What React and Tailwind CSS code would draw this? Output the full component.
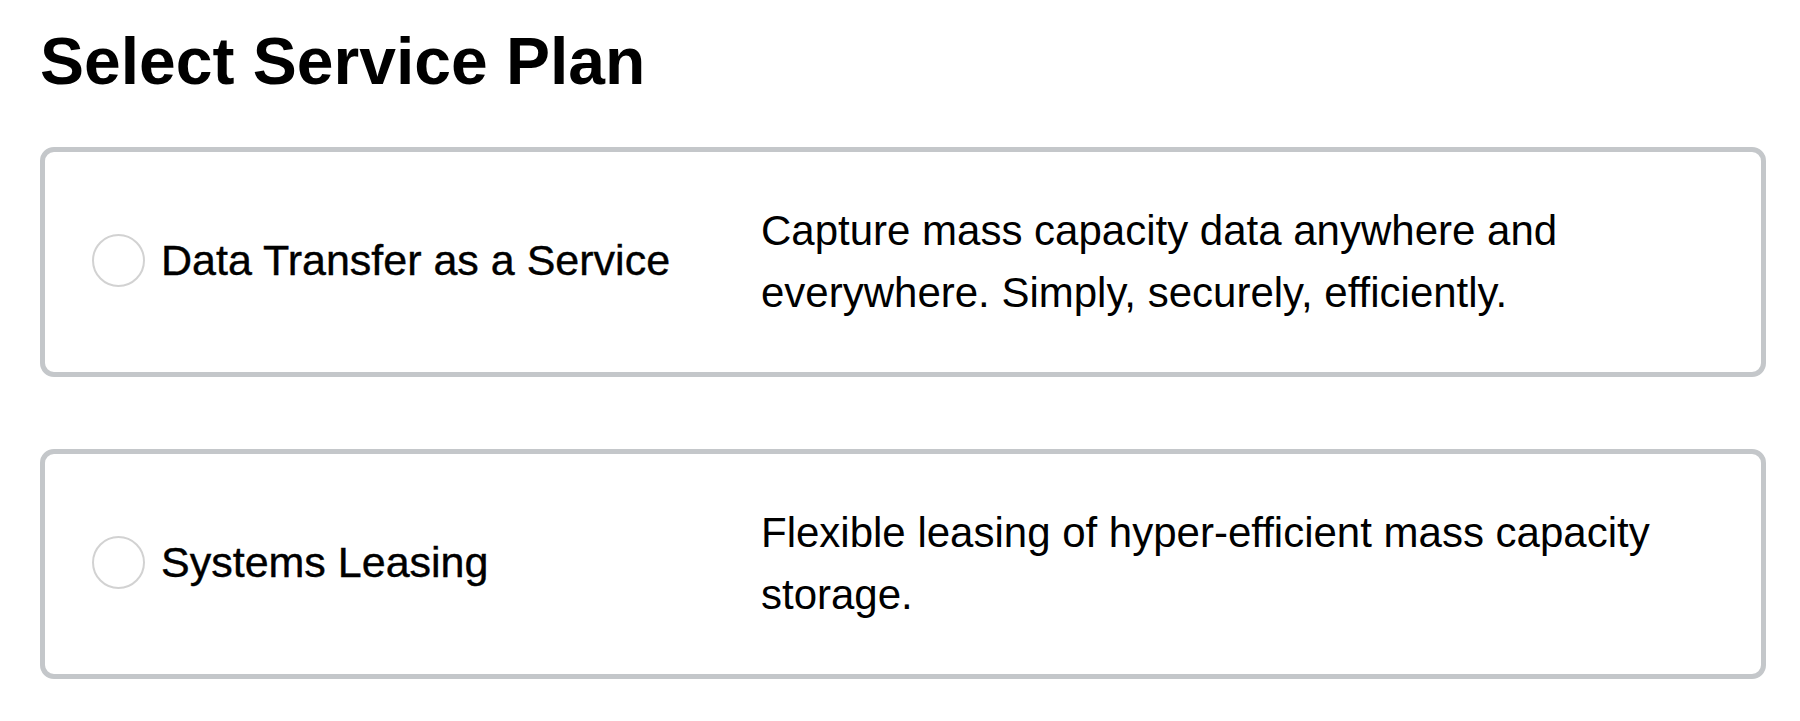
import React from "react";

const plans = [
  {
    name: "Data Transfer as a Service",
    desc: "Capture mass capacity data anywhere and everywhere. Simply, securely, efficiently.",
  },
  {
    name: "Systems Leasing",
    desc: "Flexible leasing of hyper-efficient mass capacity storage.",
  },
];

export default function App() {
  return (
    <div
      className="min-h-screen bg-white pl-10 pr-[34px] pt-[28px] text-black"
      style={{ fontFamily: '"Liberation Sans", Arial, Helvetica, sans-serif' }}
    >
      <h1 className="text-[66px] font-bold leading-none">Select Service Plan</h1>
      <div className="mt-[53px] flex flex-col gap-[72px]">
        {plans.map((p) => (
          <label
            key={p.name}
            className="flex items-center rounded-[14px] border-[5px] border-[#c4c7ca] py-12 pl-[47px] pr-12"
          >
            <div className="mb-[4px] flex w-[669px] shrink-0 items-center gap-4">
              <span className="h-[53px] w-[53px] shrink-0 rounded-full border-2 border-[#d2d2d2] bg-white" />
              <span className="text-[43px] leading-[62px] [-webkit-text-stroke:0.4px_black]">{p.name}</span>
            </div>
            <p className="flex-1 text-[42px] leading-[62px]">{p.desc}</p>
          </label>
        ))}
      </div>
    </div>
  );
}
